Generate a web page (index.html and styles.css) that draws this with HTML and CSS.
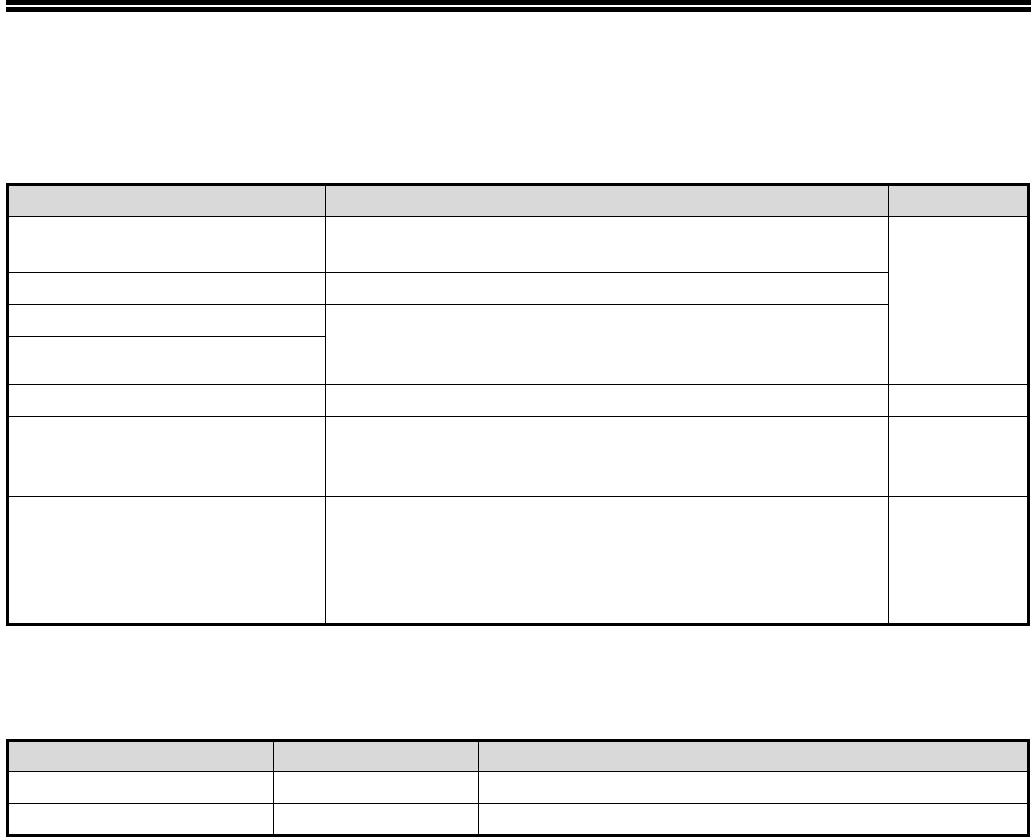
FILE: index.html
```html
<!DOCTYPE html>
<html lang="en">
<head>
<meta charset="utf-8">
<title>Document</title>
<link rel="stylesheet" href="styles.css">
</head>
<body>
<div class="page">
  <div class="rule"></div>

  <div class="grid grid-main">
    <div class="cell head"></div>
    <div class="cell head"></div>
    <div class="cell head"></div>

    <div class="cell r1 c1"></div>
    <div class="cell r1 c2"></div>
    <div class="cell c3 span-a"></div>

    <div class="cell r2 c1"></div>
    <div class="cell r2 c2"></div>

    <div class="cell r3 c1"></div>
    <div class="cell c2 span-b"></div>

    <div class="cell r4 c1"></div>

    <div class="cell r5"></div>
    <div class="cell r5"></div>
    <div class="cell r5"></div>

    <div class="cell r6"></div>
    <div class="cell r6"></div>
    <div class="cell r6"></div>

    <div class="cell r7"></div>
    <div class="cell r7"></div>
    <div class="cell r7"></div>
  </div>

  <div class="grid grid-small">
    <div class="cell head"></div>
    <div class="cell head"></div>
    <div class="cell head"></div>
    <div class="cell"></div>
    <div class="cell"></div>
    <div class="cell"></div>
    <div class="cell"></div>
    <div class="cell"></div>
    <div class="cell"></div>
  </div>
</div>
</body>
</html>
```

FILE: styles.css
```css
html, body {
  margin: 0;
  padding: 0;
  background: #ffffff;
  font-family: "Liberation Sans", Arial, sans-serif;
}

.page {
  width: 1033px;
  height: 837px;
  overflow: hidden;
  display: flex;
  flex-direction: column;
}

.rule {
  margin: 0 2px 0 6px;
  height: 2px;
  border-top: 5px solid #000;
  border-bottom: 5px solid #000;
}

.grid {
  display: grid;
  margin-left: 6px;
  width: 1024px;
  box-sizing: border-box;
  border: 3px solid #000;
  background: #000;
  gap: 1px;
}

.grid-main {
  margin-top: 171px;
  grid-template-columns: 316px 562px 138px;
  grid-template-rows: 30px 55px 31px 31px 47px 31px 79px 126px;
}

.grid-small {
  margin-top: 113px;
  grid-template-columns: 264px 204px 548px;
  grid-template-rows: 29px 31px 30px;
}

.cell {
  background: #ffffff;
}

.cell.head {
  background: #d9d9d9;
}

.span-a {
  grid-column: 3;
  grid-row: 2 / span 4;
}

.span-b {
  grid-column: 2;
  grid-row: 4 / span 2;
}

.r1.c1 { grid-column: 1; grid-row: 2; }
.r1.c2 { grid-column: 2; grid-row: 2; }
.r2.c1 { grid-column: 1; grid-row: 3; }
.r2.c2 { grid-column: 2; grid-row: 3; }
.r3.c1 { grid-column: 1; grid-row: 4; }
.r4.c1 { grid-column: 1; grid-row: 5; }
```
